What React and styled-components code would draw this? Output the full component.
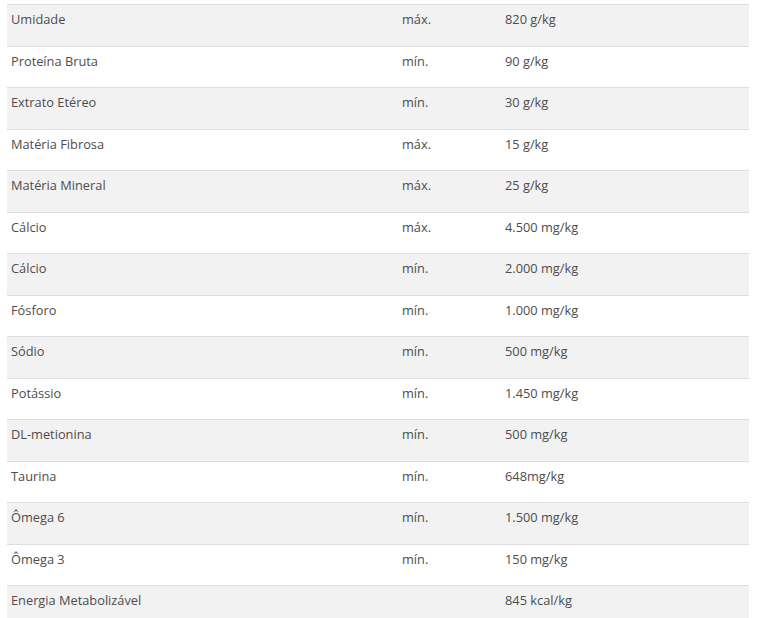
import React from "react";
import styled, { createGlobalStyle } from "styled-components";

const rows = [
  ["Umidade", "máx.", "820 g/kg"],
  ["Proteína Bruta", "mín.", "90 g/kg"],
  ["Extrato Etéreo", "mín.", "30 g/kg"],
  ["Matéria Fibrosa", "máx.", "15 g/kg"],
  ["Matéria Mineral", "máx.", "25 g/kg"],
  ["Cálcio", "máx.", "4.500 mg/kg"],
  ["Cálcio", "mín.", "2.000 mg/kg"],
  ["Fósforo", "mín.", "1.000 mg/kg"],
  ["Sódio", "mín.", "500 mg/kg"],
  ["Potássio", "mín.", "1.450 mg/kg"],
  ["DL-metionina", "mín.", "500 mg/kg"],
  ["Taurina", "mín.", "648mg/kg"],
  ["Ômega 6", "mín.", "1.500 mg/kg"],
  ["Ômega 3", "mín.", "150 mg/kg"],
  ["Energia Metabolizável", "", "845 kcal/kg"],
];

const GlobalStyle = createGlobalStyle`
  body {
    margin: 0;
    background: #fff;
    font-family: "Open Sans", "Liberation Sans", sans-serif;
  }
`;

const Wrapper = styled.div`
  padding: 4px 23px 0 7px;
`;

const Table = styled.table`
  width: 742px;
  border-collapse: collapse;
  table-layout: fixed;
`;

const Row = styled.tr`
  background-color: ${(p) => (p.$striped ? "#f2f2f2" : "#fff")};
`;

const Cell = styled.td`
  box-sizing: border-box;
  height: 41.5px;
  padding: 5px 4px 0 4px;
  border-top: 1px solid #dddddd;
  vertical-align: top;
  font-size: 12.8px;
  line-height: 18px;
  color: #4d4d4d;
  width: ${(p) => p.$w || "auto"};
`;

export default function App() {
  return (
    <>
      <GlobalStyle />
      <Wrapper>
        <Table>
          <tbody>
            {rows.map((r, i) => (
              <Row key={i} $striped={i % 2 === 0}>
                <Cell $w="391px">{r[0]}</Cell>
                <Cell $w="103px">{r[1]}</Cell>
                <Cell>{r[2]}</Cell>
              </Row>
            ))}
          </tbody>
        </Table>
      </Wrapper>
    </>
  );
}
